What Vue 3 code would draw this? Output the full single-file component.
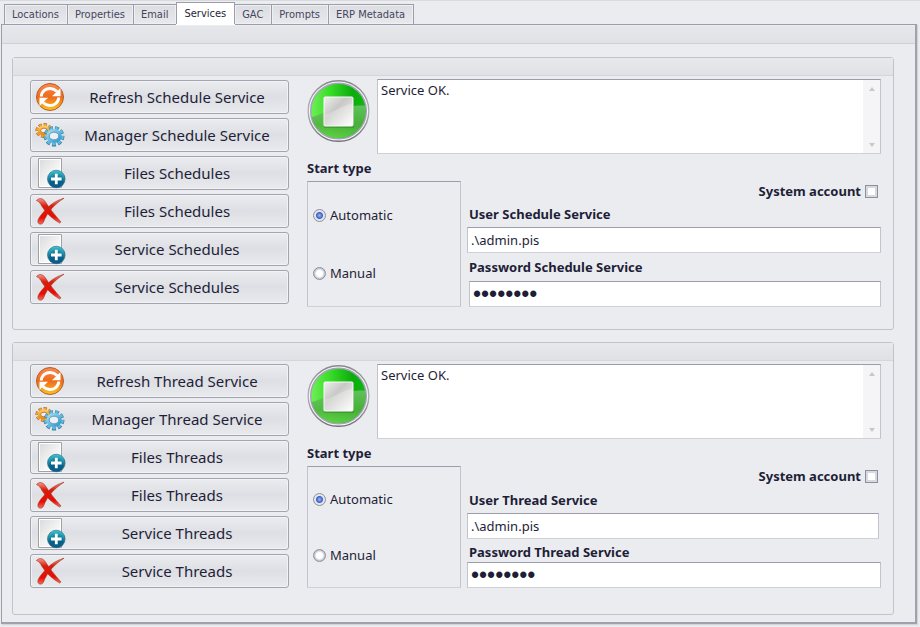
<template>
  <div class="window">
    <svg class="sprite" aria-hidden="true">
      <defs>
        <linearGradient id="orange" x1="0" y1="0" x2="0" y2="1">
          <stop offset="0" stop-color="#fb8a4e" />
          <stop offset="0.5" stop-color="#ee6c1c" />
          <stop offset="1" stop-color="#ffc21c" />
        </linearGradient>
        <linearGradient id="gear-gold" x1="0" y1="0" x2="0" y2="1">
          <stop offset="0" stop-color="#ffc65c" />
          <stop offset="1" stop-color="#f08a10" />
        </linearGradient>
        <linearGradient id="gear-blue" x1="0" y1="0" x2="1" y2="1">
          <stop offset="0" stop-color="#a4dcf4" />
          <stop offset="1" stop-color="#2c98cc" />
        </linearGradient>
        <linearGradient id="paper" x1="0" y1="0" x2="1" y2="1">
          <stop offset="0" stop-color="#d8d9da" />
          <stop offset="0.6" stop-color="#f6f6f7" />
          <stop offset="1" stop-color="#ffffff" />
        </linearGradient>
        <radialGradient id="teal" cx="0.5" cy="0.9" r="0.85">
          <stop offset="0" stop-color="#0c5c88" />
          <stop offset="0.5" stop-color="#06618a" />
          <stop offset="1" stop-color="#39c0cc" />
        </radialGradient>
        <linearGradient id="red" x1="0" y1="0" x2="0" y2="1">
          <stop offset="0" stop-color="#f29a90" />
          <stop offset="0.3" stop-color="#dc1c0c" />
          <stop offset="0.75" stop-color="#e80c04" />
          <stop offset="1" stop-color="#f07060" />
        </linearGradient>
        <linearGradient id="ring" x1="0" y1="0" x2="0" y2="1">
          <stop offset="0" stop-color="#88888c" />
          <stop offset="0.5" stop-color="#b0b0b8" />
          <stop offset="1" stop-color="#707074" />
        </linearGradient>
        <linearGradient id="green" x1="0" y1="0" x2="1" y2="0">
          <stop offset="0" stop-color="#70f058" />
          <stop offset="0.35" stop-color="#38dc28" />
          <stop offset="0.75" stop-color="#0cac0c" />
          <stop offset="1" stop-color="#10b810" />
        </linearGradient>
        <linearGradient id="green-low" x1="0" y1="0" x2="0" y2="1">
          <stop offset="0" stop-color="#6cc468" />
          <stop offset="0.6" stop-color="#50b040" />
          <stop offset="1" stop-color="#64d048" />
        </linearGradient>
        <linearGradient id="plate" x1="0" y1="0" x2="1" y2="1">
          <stop offset="0" stop-color="#f0f0ee" />
          <stop offset="0.4" stop-color="#c8c8c6" />
          <stop offset="1" stop-color="#ffffff" />
        </linearGradient>
      </defs>
      <symbol id="refresh" viewBox="0 0 32 32">
        <circle cx="16" cy="16" r="13.5" fill="url(#orange)" stroke="#b4602c" />
        <path d="M7.3 15.5C7.5 10 12 7.3 16.5 7.5c2.5.1 4.5 1 6.5 3" fill="none" stroke="#fff" stroke-width="3" />
        <path d="M26.500 7v8.300H18z" fill="#fff" />
        <path d="M24.700 16.500C24.500 22 20 24.700 15.500 24.500c-2.500-.1-4.500-1-6.500-3" fill="none" stroke="#fff" stroke-width="3" />
        <path d="M5.500 25v-8.300H14z" fill="#fff" />
      </symbol>
      <symbol id="gears" viewBox="0 0 32 32">
        <ellipse cx="10" cy="11.500" rx="6.800" ry="5.600" fill="none" stroke="#a9651c" stroke-width="3.600" pathLength="16" stroke-dasharray="1.300 0.700" stroke-dashoffset="0.150" />
        <ellipse cx="10" cy="11.500" rx="6.500" ry="5.300" fill="none" stroke="#f8a830" stroke-width="3" pathLength="16" stroke-dasharray="1 1" />
        <ellipse cx="10" cy="11.500" rx="4.700" ry="3.700" fill="#eeeff2" stroke="url(#gear-gold)" stroke-width="2.800" />
        <ellipse cx="10" cy="11.500" rx="3.300" ry="2.300" fill="none" stroke="#a9651c" stroke-width="0.700" />
        <ellipse cx="20" cy="17.300" rx="8.500" ry="8.200" fill="none" stroke="#3a7c9c" stroke-width="3.800" pathLength="18" stroke-dasharray="1.300 0.700" stroke-dashoffset="0.150" />
        <ellipse cx="20" cy="17" rx="8.200" ry="7.800" fill="none" stroke="#5cbce4" stroke-width="3.200" pathLength="18" stroke-dasharray="1 1" />
        <ellipse cx="20" cy="17" rx="6.300" ry="5.500" fill="#eeeff2" stroke="url(#gear-blue)" stroke-width="3" />
        <ellipse cx="20" cy="17" rx="4.800" ry="3.800" fill="none" stroke="#3e8cae" stroke-width="0.800" />
      </symbol>
      <symbol id="add" viewBox="0 0 32 32">
        <path d="M4.500 1.500h23v29h-23z" fill="url(#paper)" stroke="#a0a1a5" />
        <path d="M5.500 2.500h21v27h-21z" fill="none" stroke="#fff" />
        <circle cx="22.300" cy="22" r="8.800" fill="url(#teal)" stroke="#1a5f80" stroke-width="0.600" />
        <path d="M22.300 16.700v10.600M17 22h10.600" stroke="#fff" stroke-width="2.800" />
      </symbol>
      <symbol id="remove" viewBox="0 0 32 32">
        <path d="M2.500 5.500C5 2.500 9 3 11.500 7c4 6.500 9 12.500 15.500 20l-1.500 1C18 23.500 12 18 8 11.500 6.500 8.500 5 6.500 2.500 5.500z" fill="url(#red)" stroke="#a8301c" stroke-width="0.600" />
        <path d="M30 3.200C21 9 13.500 16.500 9.500 27c-.8 2.500-4.500 3-5.500.5C3.200 24 7 20 10.500 16 15.500 10 21 6 30 3.200z" fill="url(#red)" stroke="#a8301c" stroke-width="0.600" />
      </symbol>
      <symbol id="stop" viewBox="0 0 63 64">
        <circle cx="31.500" cy="32" r="30.300" fill="#f6f6fa" stroke="url(#ring)" stroke-width="1.400" />
        <circle cx="31.500" cy="32" r="27.800" fill="url(#green)" stroke="#a4a4b8" stroke-width="1.500" />
        <path d="M4.700 38C17 35 29 26 58.500 26.500 61 46 47 59 31.500 59 18 59 7 50 4.700 38z" fill="url(#green-low)" opacity="0.850" />
        <rect x="17" y="18" width="30" height="31" rx="1" fill="#2c7420" opacity="0.400" />
        <rect x="17" y="18" width="29" height="29" rx="1" fill="url(#plate)" stroke="#fafafa" />
        <path d="M17.500 36C26 33 35 27 45.500 24.500v22h-28z" fill="#fff" opacity="0.250" />
      </symbol>
    </svg>

    <nav class="tabs" role="tablist">
      <button v-for="t in tabs" :key="t" type="button" role="tab" class="tab"
              :class="{ active: t === activeTab }" :aria-selected="t === activeTab"
              @click="activeTab = t">{{ t }}</button>
    </nav>

    <main class="page">
      <div class="page-caption"></div>
      <section v-for="g in groups" :key="g.id" class="group" :class="g.id">
        <div class="group-caption"></div>
        <div class="group-body">
          <div class="actions">
            <button v-for="(a, i) in g.actions" :key="i" type="button" class="action">
              <svg class="action-icon" aria-hidden="true"><use :href="'#' + a.icon" /></svg>
              <span class="action-text">{{ a.text }}</span>
            </button>
          </div>

          <div class="details">
            <div class="status">
              <svg class="status-icon" role="img" aria-label="Stop"><use href="#stop" /></svg>
              <div class="memo">
                <textarea v-model="g.status" class="memo-text" readonly aria-label="Status"></textarea>
                <div class="memo-scroll">
                  <span class="arrow up"></span>
                  <span class="arrow down"></span>
                </div>
              </div>
            </div>

            <div class="settings">
              <div class="start">
                <div :id="g.id + '-start'" class="caption">Start type</div>
                <div class="radios" role="radiogroup" :aria-labelledby="g.id + '-start'">
                  <label v-for="s in startTypes" :key="s" class="radio">
                    <input v-model="g.start" type="radio" :name="g.id + '-start'" :value="s">
                    <span>{{ s }}</span>
                  </label>
                </div>
              </div>
              <div class="account">
                <label class="caption system">
                  System account
                  <input v-model="g.system" type="checkbox">
                </label>
                <label class="caption field-label" :for="g.id + '-user'">User {{ g.name }} Service</label>
                <input :id="g.id + '-user'" v-model="g.user" class="field user" type="text">
                <label class="caption field-label" :for="g.id + '-password'">Password {{ g.name }} Service</label>
                <input :id="g.id + '-password'" v-model="g.password" class="field password" type="password">
              </div>
            </div>
          </div>
        </div>
      </section>
    </main>
  </div>
</template>

<script setup>
import { ref, reactive } from 'vue'

const tabs = ['Locations', 'Properties', 'Email', 'Services', 'GAC', 'Prompts', 'ERP Metadata']
const activeTab = ref('Services')
const startTypes = ['Automatic', 'Manual']

function makeGroup(id, name) {
  return {
    id,
    name,
    status: 'Service OK.',
    start: 'Automatic',
    system: false,
    user: '.\\admin.pis',
    password: 'password',
    actions: [
      { icon: 'refresh', text: `Refresh ${name} Service` },
      { icon: 'gears', text: `Manager ${name} Service` },
      { icon: 'add', text: `Files ${name}s` },
      { icon: 'remove', text: `Files ${name}s` },
      { icon: 'add', text: `Service ${name}s` },
      { icon: 'remove', text: `Service ${name}s` }
    ]
  }
}

const groups = reactive([
  makeGroup('schedule', 'Schedule'),
  makeGroup('thread', 'Thread')
])
</script>

<style>
body {
  background: #ebecef;
}
</style>

<style scoped>
.window {
  box-sizing: border-box;
  padding: 1px 3px 4px 1px;
  border-top: 1px solid #d9dade;
  font-family: "Noto Sans", "Open Sans", sans-serif;
  font-size: 13px;
  color: #1e1e38;
}

.window *,
.window *::before {
  box-sizing: border-box;
}

.sprite {
  position: absolute;
  width: 0;
  height: 0;
}

/* tabs */
.tabs {
  display: flex;
  align-items: flex-end;
  height: 22px;
  padding-left: 4px;
}

.tab {
  height: 20px;
  margin: 0 0 0 -1px;
  padding: 0 8px 0 7px;
  border: 1px solid #9c9caa;
  border-bottom: 0;
  background: linear-gradient(#dcdde1, #e8e9ec);
  box-shadow: inset 0 0 0 1px #f0f0f3;
  font-family: "DejaVu Sans Condensed", "DejaVu Sans", sans-serif;
  font-size: 11px;
  line-height: 20px;
  color: #45455f;
  white-space: nowrap;
}

.tab.active {
  height: 22px;
  background: #fff;
  box-shadow: 0 1px #fff;
  color: #1e1e38;
}

/* page */
.page {
  padding: 1px 21px 7px 10px;
  border: 1px solid #9c9caa;
  border-right: 2px solid #a0a1aa;
  border-bottom: 2px solid #a0a1aa;
  box-shadow: 1px 1px 1px #d4d5d9;
}

.page-caption {
  height: 18px;
  margin: 0 -21px 13px -10px;
  border-bottom: 1px solid #cfd0d5;
  background: linear-gradient(#e6e7ea, #e1e2e5);
}

.group {
  border: 1px solid #c2c3ca;
  border-radius: 3px;
}

.group + .group {
  margin-top: 12px;
}

.group-caption {
  height: 18px;
  border-bottom: 1px solid #d5d6da;
  background: linear-gradient(#e8e9ec, #e0e1e4);
}

.group-body {
  display: flex;
  gap: 18px;
  padding: 3px 12px 22px 17px;
}

.thread .group-body {
  padding-bottom: 26px;
}

/* buttons */
.actions {
  display: flex;
  flex: 0 0 259px;
  flex-direction: column;
  gap: 4px;
}

.schedule .actions {
  padding-top: 1px;
}

.action {
  display: flex;
  align-items: center;
  height: 34px;
  padding: 0 0 0 3px;
  border: 1px solid #a3a4b0;
  border-radius: 3px;
  background: linear-gradient(#ebecef, #dddfe4 50%, #e9eaed);
  box-shadow: inset 0 0 0 1px #f1f2f4;
  font-family: "Noto Sans", "Open Sans", sans-serif;
  font-size: 15px;
  color: #1e1e38;
}

.action-icon {
  flex: none;
  width: 32px;
  height: 32px;
}

.action-text {
  flex: 1;
  text-align: center;
  white-space: nowrap;
}

/* status */
.details {
  flex: 1;
  min-width: 0;
}

.status {
  display: flex;
  gap: 7px;
}

.status-icon {
  flex: none;
  width: 63px;
  height: 64px;
}

.memo {
  display: flex;
  flex: 1;
  height: 75px;
  border: 1px solid #c2c3cc;
  border-top-color: #9c9caa;
  border-bottom-color: #d0d1d6;
  background: #fff;
}

.memo-text {
  flex: 1;
  min-width: 0;
  padding: 1px 3px;
  border: 0;
  outline: 0;
  resize: none;
  background: none;
  font: inherit;
  line-height: 18px;
  color: inherit;
}

.memo-scroll {
  display: flex;
  flex-direction: column;
  align-items: center;
  justify-content: space-between;
  width: 17px;
  padding: 7px 0 6px;
  background: #f5f5f7;
}

.arrow {
  border: 3px solid transparent;
}

.arrow.up {
  border-top: 0;
  border-bottom: 4px solid #c8c8cc;
}

.arrow.down {
  border-bottom: 0;
  border-top: 4px solid #c8c8cc;
}

/* settings */
.settings {
  display: flex;
  gap: 6px;
  margin-top: 4px;
}

.caption {
  font-weight: 700;
  line-height: 20px;
}

.start {
  display: flex;
  flex: 0 0 154px;
  flex-direction: column;
  gap: 3px;
}

.radios {
  display: flex;
  flex: 1;
  flex-direction: column;
  padding: 4px 5px;
  border: 1px solid #c2c3cc;
  border-top-color: #9c9caa;
  border-bottom-color: #d0d1d6;
}

.radio {
  display: flex;
  flex: 1;
  align-items: center;
  gap: 4px;
}

.radio input {
  appearance: none;
  width: 13px;
  height: 13px;
  margin: 0;
  border: 1px solid #8e8f9c;
  border-radius: 50%;
  background: radial-gradient(circle, #fff 3px, #c8c9d2 5px);
}

.radio input:checked {
  background: radial-gradient(circle, #a0b8f0 0, #3c62c4 3px, #e4e5ee 4px);
}

.account {
  display: grid;
  flex: 1;
  grid-template-rows: 20px 26px 26px 28px 26px;
  min-width: 0;
  margin-top: 23px;
}

.thread .account {
  grid-template-rows: 20px 27px 26px 23px 26px;
}

.system {
  display: flex;
  justify-content: flex-end;
  align-items: center;
  gap: 4px;
  padding-right: 3px;
}

.system input {
  appearance: none;
  width: 13px;
  height: 13px;
  margin: 0;
  border: 1px solid #8e8f9c;
  background: #fff;
  box-shadow: inset 0 0 0 2px #d8d9df;
}

.system input:checked {
  background: #3c62c4;
}

.field-label {
  align-self: center;
  padding-left: 2px;
}

.thread .field-label:last-of-type {
  align-self: end;
}

.field {
  min-width: 0;
  padding: 0 3px;
  border: 1px solid #c2c3cc;
  border-top-color: #9c9caa;
  border-bottom-color: #d0d1d6;
  border-radius: 0;
  outline: 0;
  background: #fff;
  font: inherit;
  color: inherit;
}

.password {
  font-family: "Liberation Sans", sans-serif;
  font-size: 23px;
}

.schedule .password {
  margin-left: 2px;
}

.thread .user {
  margin-right: 2px;
}
</style>
